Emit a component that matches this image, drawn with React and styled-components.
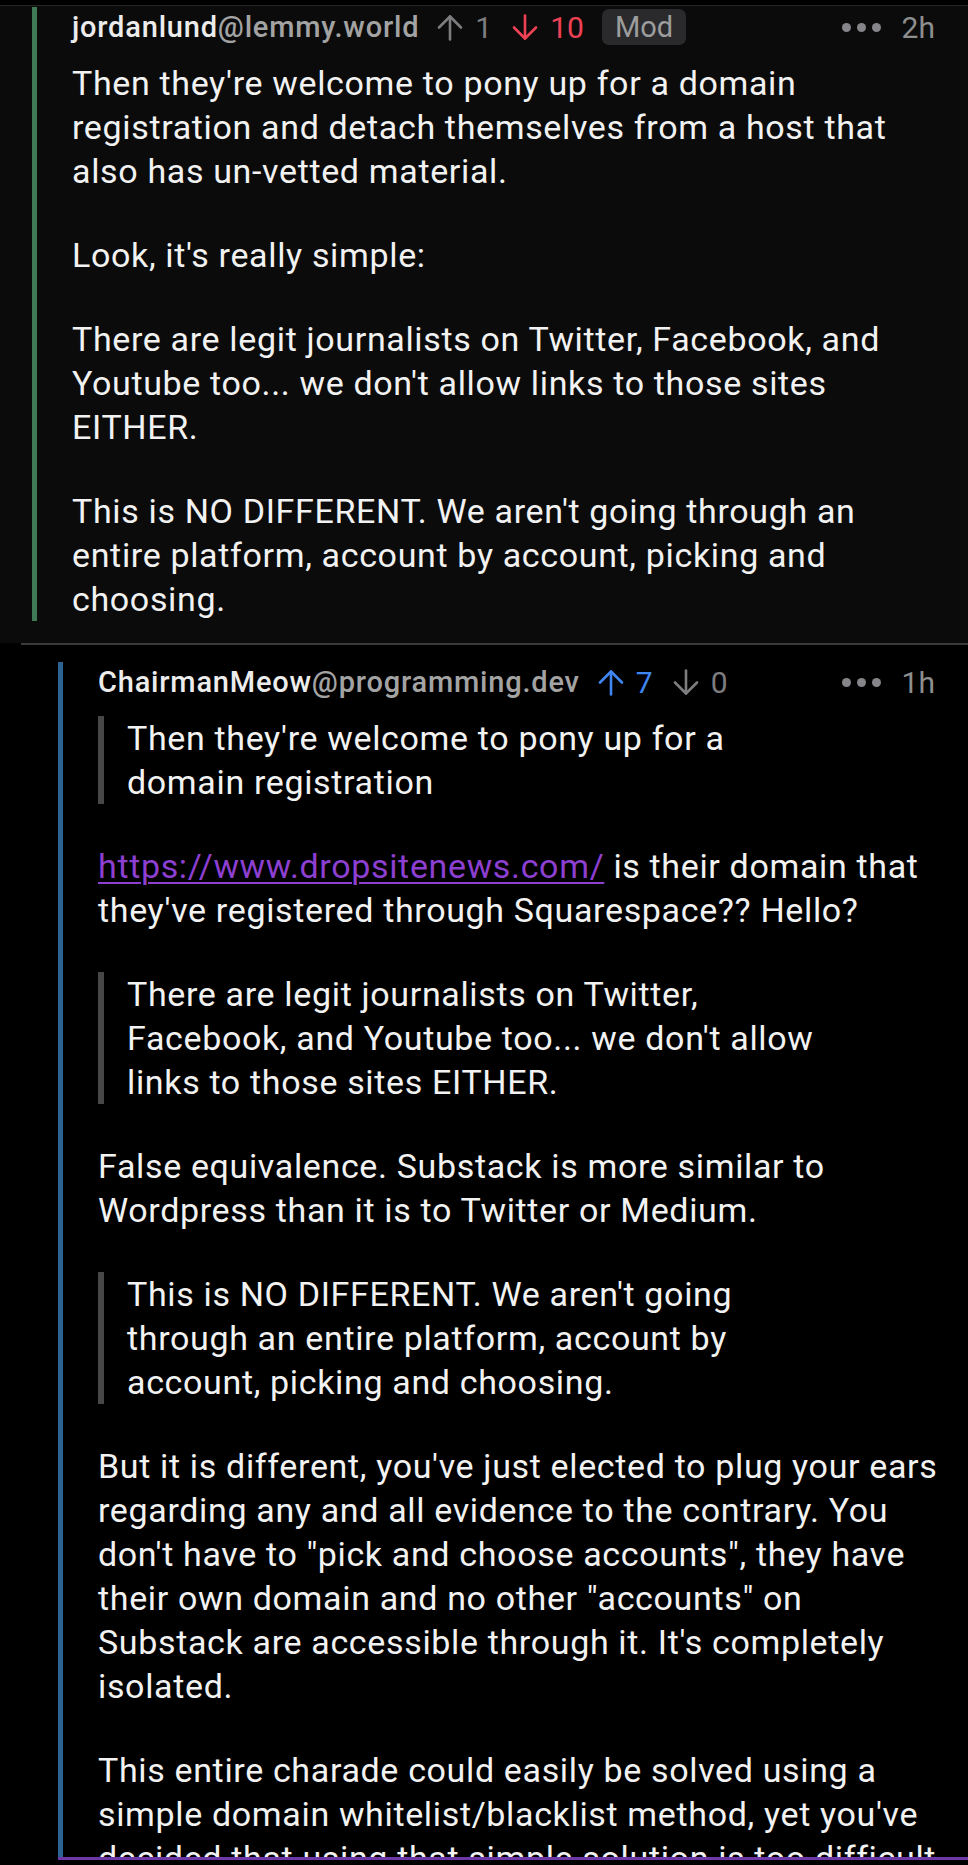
import React from "react";
import styled, { createGlobalStyle } from "styled-components";

const GlobalStyle = createGlobalStyle`
    html, body {
        margin: 0;
        padding: 0;
        background: #000;
    }

    body {
        font-family: Roboto, "Noto Sans", "Liberation Sans", sans-serif;
        -webkit-font-smoothing: antialiased;
    }
`;

const Page = styled.div`
    position: relative;
    width: 968px;
    height: 1865px;
    overflow: hidden;
    background: #000;
    padding-top: 5px;
    box-sizing: border-box;
`;

const Comment = styled.div`
    background: ${(p) => p.bg};
    border-top: ${(p) => (p.divider ? "2px solid #3a3a3a" : "1px solid #262626")};
    margin-left: ${(p) => p.indent}px;
    padding: ${(p) => p.padTop}px 23px 22px ${(p) => p.barLeft}px;
`;

const Thread = styled.div`
    border-left: 5px solid ${(p) => p.color};
    padding-left: 35px;
`;

const Header = styled.div`
    display: flex;
    align-items: center;
    height: 40px;
    padding-right: 10px;
    font-size: 29px;
    white-space: nowrap;
`;

const Author = styled.span`
    font-weight: 500;
    letter-spacing: 0.8px;
    color: #ececec;
`;

const Instance = styled.span`
    font-weight: 500;
    letter-spacing: 0.8px;
    color: #a3a3a3;
`;

const Votes = styled.div`
    display: flex;
    align-items: center;
    margin-left: 18px;
    gap: 20px;
`;

const Vote = styled.span`
    display: inline-flex;
    align-items: center;
    gap: 12px;
    color: ${(p) => p.color};
    font-size: 30px;
    font-weight: 400;
`;

const Badge = styled.span`
    margin-left: 18px;
    padding: 2px 13px;
    border-radius: 7px;
    background: #2a2a2c;
    color: #9d9d9d;
    font-size: 29px;
    line-height: 32px;
`;

const Spacer = styled.div`
    flex: 1;
`;

const Dots = styled.span`
    display: inline-flex;
    gap: 6px;
    margin-right: 21px;

    i {
        width: 9px;
        height: 9px;
        border-radius: 50%;
        background: #85858a;
    }
`;

const Age = styled.span`
    color: #8e8e8e;
    font-size: 30px;
`;

const Body = styled.div`
    margin-top: 14px;
    color: #f2f2f2;
    font-size: 34px;
    letter-spacing: 0.65px;
    line-height: 44px;

    p {
        margin: 0 0 40px;
    }

    p:last-child {
        margin-bottom: 0;
    }

    a {
        color: #8c3fd0;
        text-decoration: underline;
        text-underline-offset: 4px;
        text-decoration-thickness: 2px;
    }
`;

const Quote = styled.blockquote`
    margin: 0 116px 40px 0;
    padding-left: 23px;
    border-left: 6px solid #474747;
`;

const BottomEdge = styled.div`
    position: absolute;
    left: 58px;
    right: 0;
    bottom: 0;
    height: 5px;
    border-top: 3px solid #6f38a8;
    background: #000;
`;

const Arrow = ({ down, color }) => (
    <svg
        width="26"
        height="27"
        viewBox="0 0 26 27"
        fill="none"
        stroke={color}
        strokeWidth="2.6"
        strokeLinecap="round"
        strokeLinejoin="round"
    >
        {down ? (
            <>
                <path d="M13 1.5v23" />
                <path d="M2 13.5l11 11 11-11" />
            </>
        ) : (
            <>
                <path d="M13 25.5v-23" />
                <path d="M2 13.5l11-11 11 11" />
            </>
        )}
    </svg>
);

const MetaRow = ({ name, instance, up, down, upColor, downColor, mod, age }) => (
    <Header>
        <Author>{name}</Author>
        <Instance>{instance}</Instance>
        <Votes>
            <Vote color={upColor}>
                <Arrow color={upColor} />
                {up}
            </Vote>
            <Vote color={downColor}>
                <Arrow down color={downColor} />
                {down}
            </Vote>
        </Votes>
        {mod && <Badge>Mod</Badge>}
        <Spacer />
        <Dots>
            <i />
            <i />
            <i />
        </Dots>
        <Age>{age}</Age>
    </Header>
);

export default function App() {
    return (
        <>
            <GlobalStyle />
            <Page>
                <Comment bg="#0b0b0b" indent={0} padTop={1} barLeft={32}>
                    <Thread color="#3e7a55">
                        <MetaRow
                            name="jordanlund"
                            instance="@lemmy.world"
                            up="1"
                            down="10"
                            upColor="#7d7d80"
                            downColor="#ef4155"
                            mod
                            age="2h"
                        />
                        <Body>
                            <p>
                                Then they're welcome to pony up for a domain
                                registration and detach themselves from a host
                                that also has un-vetted material.
                            </p>
                            <p>Look, it's really simple:</p>
                            <p>
                                There are legit journalists on Twitter,
                                Facebook, and Youtube too... we don't allow
                                links to those sites EITHER.
                            </p>
                            <p>
                                This is NO DIFFERENT. We aren't going through an
                                entire platform, account by account, picking and
                                choosing.
                            </p>
                        </Body>
                    </Thread>
                </Comment>

                <Comment bg="#000" divider indent={21} padTop={17} barLeft={37}>
                    <Thread color="#2b6393">
                        <MetaRow
                            name="ChairmanMeow"
                            instance="@programming.dev"
                            up="7"
                            down="0"
                            upColor="#3f86f0"
                            downColor="#7d7d80"
                            age="1h"
                        />
                        <Body>
                            <Quote>
                                Then they're welcome to pony up for a domain
                                registration
                            </Quote>
                            <p>
                                <a href="#">https://www.dropsitenews.com/</a> is
                                their domain that they've registered through
                                Squarespace?? Hello?
                            </p>
                            <Quote>
                                There are legit journalists on Twitter,
                                Facebook, and Youtube too... we don't allow
                                links to those sites EITHER.
                            </Quote>
                            <p>
                                False equivalence. Substack is more similar to
                                Wordpress than it is to Twitter or Medium.
                            </p>
                            <Quote>
                                This is NO DIFFERENT. We aren't going through an
                                entire platform, account by account, picking and
                                choosing.
                            </Quote>
                            <p>
                                But it is different, you've just elected to plug
                                your ears regarding any and all evidence to the
                                contrary. You don't have to "pick and choose
                                accounts", they have their own domain and no
                                other "accounts" on Substack are accessible
                                through it. It's completely isolated.
                            </p>
                            <p>
                                This entire charade could easily be solved using
                                a simple domain whitelist/blacklist method, yet
                                you've decided that using that simple solution
                                is too difficult for some reason.
                            </p>
                        </Body>
                    </Thread>
                </Comment>
                <BottomEdge />
            </Page>
        </>
    );
}
